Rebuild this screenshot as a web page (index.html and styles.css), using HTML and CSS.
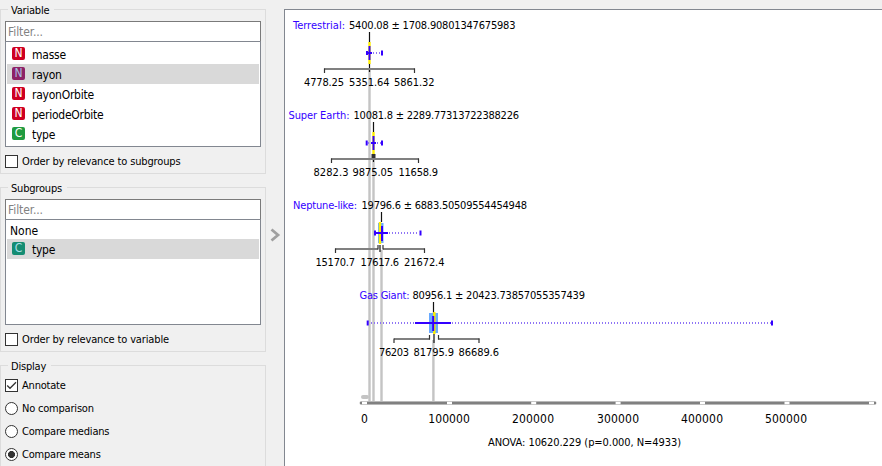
FILE: index.html
```html
<!DOCTYPE html>
<html lang="en">
<head>
<meta charset="utf-8">
<title>Box Plot</title>
<link rel="stylesheet" href="styles.css">
</head>
<body>
<div class="window">
<aside class="controls">
  <section class="group">
    <h2>Variable</h2>
    <div class="filter">Filter...</div>
    <ul class="list">
      <li><span class="icon num">N</span><span class="label">masse</span></li>
      <li class="selected"><span class="icon num-sel">N</span><span class="label">rayon</span></li>
      <li><span class="icon num">N</span><span class="label">rayonOrbite</span></li>
      <li><span class="icon num">N</span><span class="label">periodeOrbite</span></li>
      <li><span class="icon cat">C</span><span class="label">type</span></li>
    </ul>
    <label class="option"><span class="check"></span><span class="caption">Order by relevance to subgroups</span></label>
  </section>
  <section class="group">
    <h2>Subgroups</h2>
    <div class="filter">Filter...</div>
    <ul class="list">
      <li class="plain">None</li>
      <li class="selected"><span class="icon cat-sel">C</span><span class="label">type</span></li>
    </ul>
    <label class="option"><span class="check"></span><span class="caption">Order by relevance to variable</span></label>
  </section>
  <section class="group display">
    <h2>Display</h2>
    <label class="option"><span class="check"><svg width="11" height="11" viewBox="0 0 11 11"><path d="M1.2 5.5 4 8.3 10 2.2" fill="none" stroke="#333" stroke-width="1.3"/></svg></span><span class="caption">Annotate</span></label>
    <label class="option"><span class="radio"></span><span class="caption">No comparison</span></label>
    <label class="option"><span class="radio"></span><span class="caption">Compare medians</span></label>
    <label class="option"><span class="radio on"></span><span class="caption">Compare means</span></label>
  </section>
</aside>
<div class="handle"><svg width="11" height="14" viewBox="0 0 11 14"><path d="M1.5 1.5 8 7 1.5 12.500" fill="none" stroke="#a0a0a0" stroke-width="2.8"/></svg></div>
<main class="plot">
<svg class="chart" width="597" height="456" viewBox="285 10 597 456">
  <g stroke="#c4c4c4" stroke-width="2.4">
    <path d="M369.500 70V402M373.500 160V402M381.500 250V402M433.400 340V402"/>
    <path d="M363 397H367" stroke-width="4" stroke-linecap="round"/>
  </g>
  <path d="M361.500 403H874.500" stroke="#b8b8b8" stroke-width="4" stroke-linecap="round"/>
  <path d="M360 403H876" stroke="#808080" stroke-width="2"/>
  <path d="M362 403h5M447 403h5M531.200 403h5M615.600 403h5M700 403h5M784.500 403h5M869 403h5" stroke="#fff" stroke-width="2.400"/>

  <g class="box">
    <path class="mark" d="M369.500 32V43M369.500 63V72"/>
    <path class="bracket" d="M324 69H415"/>
    <path class="end" d="M324.500 68.500V73M414.500 68.500V73"/>
    <path class="median" d="M369.500 42V64"/>
    <path class="mean" d="M369.500 46V60"/>
    <path class="range" d="M373 53H380"/>
    <path class="dev" d="M366.500 53H372"/>
    <path class="cap" d="M367 51V55M382 50.500V55.500"/>
  </g>
  <g class="box">
    <path class="mark" d="M373.500 122V132M373.500 153V162"/>
    <path d="M373.500 154V159" stroke="#333" stroke-width="4"/>
    <path class="bracket" d="M331 159H419"/>
    <path class="end" d="M331.500 158.500V163M418.500 158.500V163"/>
    <path class="median" d="M373.500 132V154"/>
    <path class="mean" d="M373.500 136V150"/>
    <path class="range" d="M368 143H381"/>
    <path class="dev" d="M371 143H376"/>
    <path class="cap" d="M366.700 140.500V145.500M382 140.500V145.500"/>
  </g>
  <g class="box">
    <rect x="378" y="223" width="5.500" height="20" fill="#69aaff"/>
    <path class="mark" d="M381.500 212V222M380 245V252"/>
    <path class="bracket" d="M335 249H378M383 249H425"/>
    <path class="end" d="M335.500 248.500V253M424.500 248.500V253M378 245V249.500M383 245V249.500"/>
    <path class="median" d="M380 222V244"/>
    <path class="mean" d="M382 226V241"/>
    <path class="range" d="M389 233H419"/>
    <path class="dev" d="M375 233H388"/>
    <path class="cap" d="M375 230.500V235.500M420.500 230.500V235.500"/>
  </g>
  <g class="box">
    <rect x="429" y="313" width="9" height="20" fill="#69aaff"/>
    <path class="mark" d="M433.500 302V313M434 334V343"/>
    <path class="bracket" d="M394 339H430M438 339H479.500"/>
    <path class="end" d="M394 338.500V343M479 338.500V343M429.500 335V339.500M438.500 335V339.500"/>
    <path class="median" d="M434.300 312V334"/>
    <path class="mean" d="M433.200 316V331"/>
    <path class="range" d="M371 323H415M452 323H771"/>
    <path class="dev" d="M415 323H451"/>
    <path class="cap" d="M367.700 320.500V325.500M772 320.500V325.500"/>
  </g>

  <g class="name">
    <text x="293" y="29" textLength="52">Terrestrial:</text>
    <text x="288.500" y="119" textLength="61">Super Earth:</text>
    <text x="293" y="209" textLength="64">Neptune-like:</text>
    <text x="359.500" y="299" textLength="50">Gas Giant:</text>
  </g>
  <g class="value">
    <text x="349" y="29" textLength="166.500">5400.08 ± 1708.90801347675983</text>
    <text x="353.500" y="119" textLength="165.500">10081.8 ± 2289.77313722388226</text>
    <text x="361.500" y="209" textLength="165.500">19796.6 ± 6883.50509554454948</text>
    <text x="412.500" y="299" textLength="172.500">80956.1 ± 20423.73857055357439</text>
    <text x="304" y="86" textLength="40">4778.25</text>
    <text x="349" y="86" textLength="40.500">5351.64</text>
    <text x="394" y="86" textLength="40.500">5861.32</text>
    <text x="313.500" y="176" textLength="35">8282.3</text>
    <text x="352.500" y="176" textLength="40.500">9875.05</text>
    <text x="398.500" y="176" textLength="39.500">11658.9</text>
    <text x="315.500" y="266" textLength="39.500">15170.7</text>
    <text x="360.500" y="266" textLength="38.500">17617.6</text>
    <text x="404" y="266" textLength="40.500">21672.4</text>
    <text x="379" y="356" textLength="30">76203</text>
    <text x="413.500" y="356" textLength="40.500">81795.9</text>
    <text x="458.500" y="356" textLength="40.500">86689.6</text>
    <text x="488" y="446" textLength="193">ANOVA: 10620.229 (p=0.000, N=4933)</text>
  </g>
  <g class="tick">
    <text x="361" y="423">0</text>
    <text x="428.300" y="423" textLength="41.500">100000</text>
    <text x="512" y="423" textLength="42">200000</text>
    <text x="597" y="423" textLength="42">300000</text>
    <text x="681" y="423" textLength="42">400000</text>
    <text x="765" y="423" textLength="42">500000</text>
  </g>
</svg>
</main>
</div>
</body>
</html>
```
FILE: styles.css
```css
* { box-sizing: border-box; }
body {
  margin: 0;
  width: 882px;
  height: 466px;
  overflow: hidden;
  background: #f0f0f0;
  color: #000;
  font: 11px/14px "DejaVu Sans Condensed", "DejaVu Sans", sans-serif;
  font-stretch: condensed;
}
.window { display: flex; height: 466px; }
.controls {
  width: 266px;
  flex: none;
  padding-top: 9px;
}
.group {
  height: 165px;
  margin-bottom: 13px;
  padding: 0 4px;
  border: 1px solid #dcdcdc;
}
.group.display {
  height: 101px;
  margin-bottom: 0;
  border-bottom: 0;
}
h2 {
  width: max-content;
  height: 14px;
  margin: -7px 0 4px 3px;
  padding: 1px 5px 0 3px;
  background: #f0f0f0;
  font-size: 11px;
  font-weight: normal;
  letter-spacing: -0.2px;
}
.filter {
  height: 21px;
  padding: 3px 2px;
  border: 1px solid #7a7a7a;
  background: #fff;
  color: #828282;
  font-size: 12px;
  letter-spacing: -0.1px;
}
.list {
  height: 106px;
  margin: -1px 0 0;
  padding: 2px 1px;
  border: 1px solid #828790;
  background: #fff;
  list-style: none;
  font-size: 12px;
}
.list li {
  display: flex;
  align-items: center;
  height: 20px;
  padding-left: 5px;
  letter-spacing: -0.25px;
}
.list li.plain { height: 17px; padding-left: 3px; letter-spacing: 0; }
.label { padding-top: 2px; }
.selected { background: #d9d9d9; }
.icon {
  width: 13px;
  height: 13px;
  margin: -1px 7px 0 0;
  border-radius: 2px;
  color: #fff;
  line-height: 13px;
  text-align: center;
}
.num { background: #cf0022; }
.num-sel { background: #8e2166; color: #a9bfe4; }
.cat { background: #209b40; }
.cat-sel { background: #148c72; color: #a9dfe8; }
.option {
  display: flex;
  align-items: center;
  gap: 4px;
  height: 13px;
  margin-top: 8px;
  letter-spacing: -0.14px;
}
.caption { padding-top: 1px; }
.display .option { margin: 0 0 10px; letter-spacing: -0.2px; }
.display h2 { margin-bottom: 6px; }
.check, .radio {
  display: block;
  width: 13px;
  height: 13px;
  border: 1px solid #333;
  background: #fff;
}
.check svg { display: block; }
.radio { border-radius: 50%; }
.radio.on { background: radial-gradient(circle, #333 3.2px, #fff 3.8px); }
.handle {
  width: 18px;
  flex: none;
  display: flex;
  align-items: center;
  justify-content: center;
  padding-top: 4px;
}
.plot {
  flex: none;
  width: 598px;
  height: 457px;
  margin-top: 9px;
  border: solid #828790;
  border-width: 1px 0 0 1px;
  background: #fff;
}
.chart { display: block; }
.box { fill: none; }
.mark { stroke: #111; stroke-width: 1.2; }
.bracket { stroke: #808080; stroke-width: 2; }
.end { stroke: #333; stroke-width: 1.2; }
.median { stroke: #ffee00; stroke-width: 2.4; }
.mean { stroke: #3300ff; stroke-width: 2; }
.range { stroke: #8f75f5; stroke-width: 2; stroke-dasharray: 1 2; }
.dev { stroke: #3300ff; stroke-width: 2; }
.cap { stroke: #3300ff; stroke-width: 2; }
.name { fill: #3300ff; }
.name, .value { font-size: 11px; }
.tick { font-size: 12px; }
```
